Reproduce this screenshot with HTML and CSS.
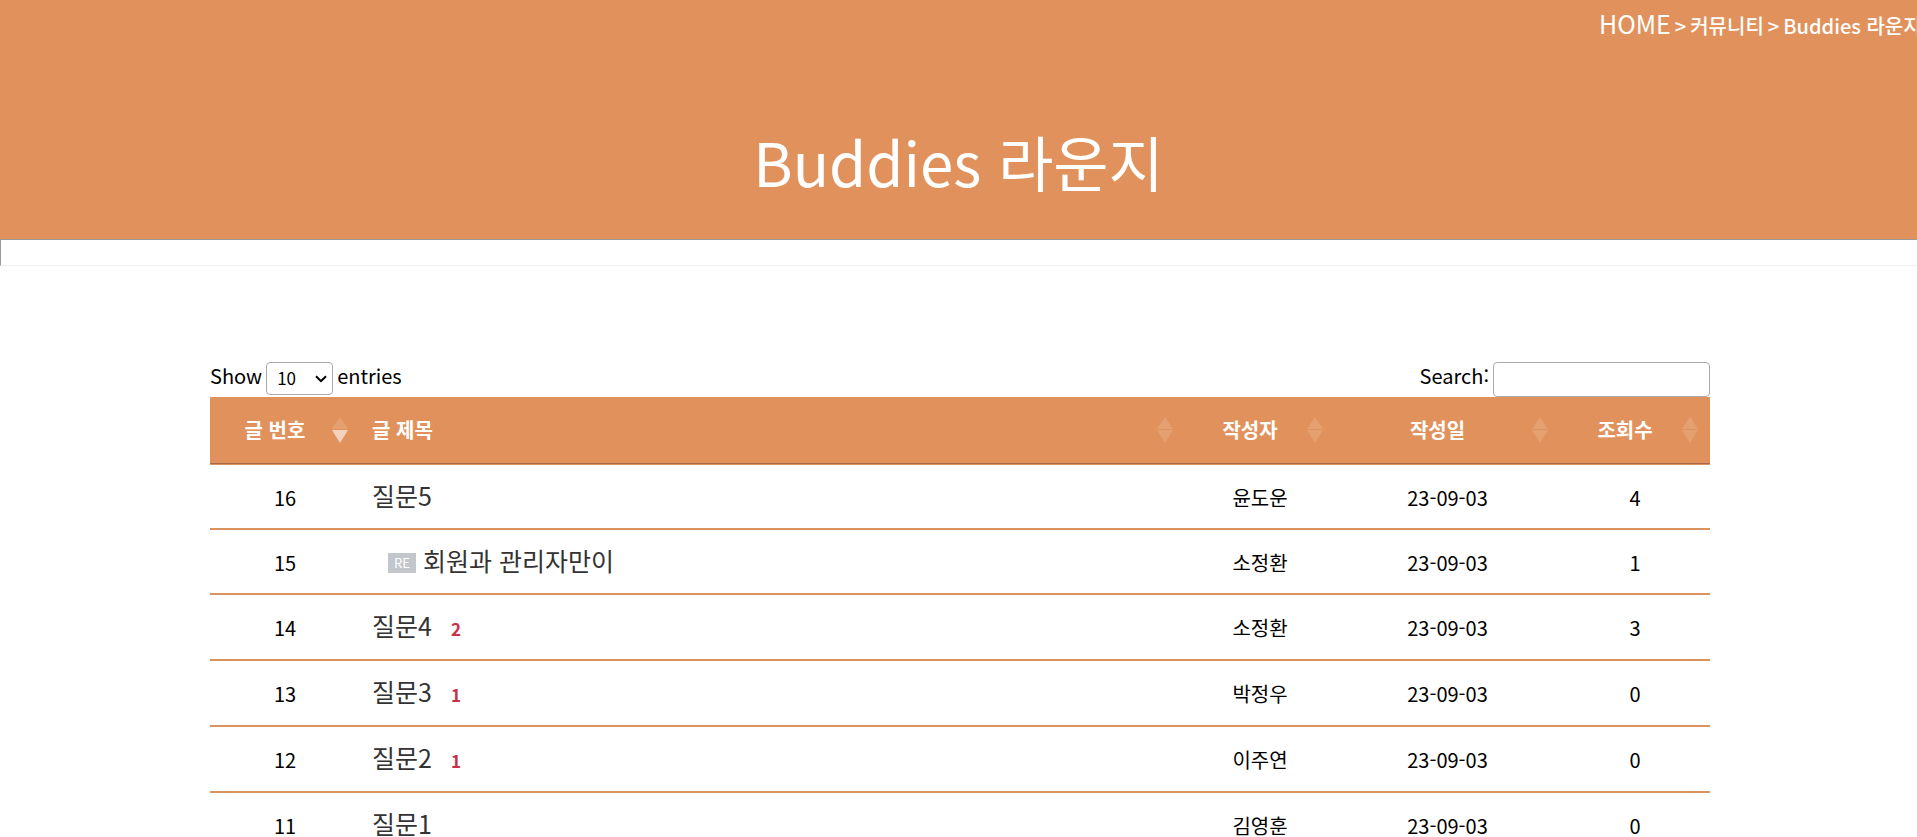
FILE: index.html
```html
<!DOCTYPE html>
<html lang="ko">
<head>
<meta charset="utf-8">
<title>Buddies 라운지</title>
<link rel="stylesheet" href="styles.css">
</head>
<body>
<header class="banner">
  <nav class="breadcrumb"><a class="home" href="#">HOME</a><span>&gt;</span><span>커뮤니티</span><span>&gt;</span><span>Buddies 라운지</span></nav>
  <h1 class="banner-title">Buddies 라운지</h1>
</header>
<hr class="divider">
<main class="board">
  <div class="controls">
    <label class="control">Show
      <span class="picker"><select class="length"><option>10</option><option>25</option><option>50</option><option>100</option></select><svg class="chevron" viewBox="0 0 12 8"><path d="M1 1.2L6 6.2L11 1.2"/></svg></span>
      entries</label>
    <label class="control">Search: <input class="search" type="search"></label>
  </div>
  <table class="posts">
    <colgroup><col class="c-no"><col class="c-title"><col class="c-writer"><col class="c-date"><col class="c-views"></colgroup>
    <thead>
      <tr>
        <th class="desc">글 번호<svg class="sort" viewBox="0 0 16 26"><path class="up" d="M8 0L16 12H0z"/><path class="down" d="M0 13H16L8 26z"/></svg></th>
        <th class="subject">글 제목<svg class="sort" viewBox="0 0 16 26"><path class="up" d="M8 0L16 12H0z"/><path class="down" d="M0 13H16L8 26z"/></svg></th>
        <th>작성자<svg class="sort" viewBox="0 0 16 26"><path class="up" d="M8 0L16 12H0z"/><path class="down" d="M0 13H16L8 26z"/></svg></th>
        <th>작성일<svg class="sort" viewBox="0 0 16 26"><path class="up" d="M8 0L16 12H0z"/><path class="down" d="M0 13H16L8 26z"/></svg></th>
        <th>조회수<svg class="sort" viewBox="0 0 16 26"><path class="up" d="M8 0L16 12H0z"/><path class="down" d="M0 13H16L8 26z"/></svg></th>
      </tr>
    </thead>
    <tbody>
      <tr><td>16</td><td class="subject"><a href="#">질문5</a></td><td>윤도운</td><td>23-09-03</td><td>4</td></tr>
      <tr><td>15</td><td class="subject"><span class="reply">RE</span><a href="#">회원과 관리자만이</a></td><td>소정환</td><td>23-09-03</td><td>1</td></tr>
      <tr class="commented"><td>14</td><td class="subject"><a href="#">질문4</a><span class="count">2</span></td><td>소정환</td><td>23-09-03</td><td>3</td></tr>
      <tr class="commented"><td>13</td><td class="subject"><a href="#">질문3</a><span class="count">1</span></td><td>박정우</td><td>23-09-03</td><td>0</td></tr>
      <tr class="commented"><td>12</td><td class="subject"><a href="#">질문2</a><span class="count">1</span></td><td>이주연</td><td>23-09-03</td><td>0</td></tr>
      <tr><td>11</td><td class="subject"><a href="#">질문1</a></td><td>김영훈</td><td>23-09-03</td><td>0</td></tr>
    </tbody>
  </table>
</main>
</body>
</html>
```
FILE: styles.css
```css
* { box-sizing: border-box; }

body {
  margin: 0;
  background: #fff;
  color: #000;
  font: 20px/30px "Noto Sans CJK KR", sans-serif;
}

a { color: inherit; text-decoration: none; }

.banner {
  height: 239px;
  background: #e1925c;
  color: #fff;
}

.breadcrumb {
  display: flex;
  align-items: baseline;
  gap: 4px;
  width: 318px;
  margin-left: auto;
  padding-top: 5px;
  line-height: 36px;
  font-weight: 500;
  white-space: nowrap;
  overflow: hidden;
}

.home { font-size: 25px; font-weight: 400; }

.banner-title {
  margin: 73px 0 0;
  font-size: 60px;
  line-height: 88px;
  font-weight: 400;
  text-align: center;
}

.divider {
  height: 27px;
  margin: 0;
  border: 1px solid #eee;
  border-top-color: #9a9a9a;
  border-left-color: #9a9a9a;
  border-right: 0;
}

.board {
  width: 1503px;
  max-width: 100%;
  height: 475px;
  margin: 96px auto 0;
  padding-left: 3px;
  overflow: hidden;
}

.controls {
  display: flex;
  justify-content: space-between;
  height: 35px;
  line-height: 28px;
}

.control {
  display: flex;
  align-items: flex-start;
  gap: 4px;
}

.picker { position: relative; height: 33px; }

.length,
.search {
  border: 1px solid #aaa;
  border-radius: 4px;
  background: #fff;
  color: #000;
  font-family: inherit;
}

.length {
  display: block;
  appearance: none;
  width: 67px;
  height: 33px;
  padding: 0 10px 2px;
  font-size: 17px;
  line-height: 29px;
}

.chevron {
  position: absolute;
  top: 13px;
  right: 6px;
  width: 12px;
  height: 8px;
  fill: none;
  stroke: #000;
  stroke-width: 2;
  pointer-events: none;
}

.search {
  width: 217px;
  height: 35px;
  padding: 5px;
  font-size: 16px;
}

.posts {
  width: 100%;
  table-layout: fixed;
  border-collapse: separate;
  border-spacing: 0;
}

.c-no, .c-writer, .c-views { width: 10%; }
.c-title { width: 55%; }
.c-date { width: 15%; }

th {
  position: relative;
  height: 67px;
  padding: 0 30px 0 10px;
  border-bottom: 1px solid #a9694a;
  background: #e1925c;
  color: #fff;
  font-weight: 700;
}

.sort {
  position: absolute;
  right: 12px;
  top: 20px;
  width: 16px;
  height: 26px;
  fill: #fff;
}

.up, .down { opacity: 0.13; }
.desc .down { opacity: 0.6; }

td {
  height: 65px;
  padding: 3px 10px 0;
  border-bottom: 2px solid #da935f;
  text-align: center;
}

tbody tr:first-child td {
  height: 66px;
  border-top: 1px solid #da935f;
}

.commented td { height: 66px; padding-top: 2px; }

.subject { padding-left: 12px; text-align: left; }

td.subject {
  padding-top: 0;
  padding-bottom: 3px;
  padding-left: 12px;
  color: #333;
  font-size: 25px;
}

.commented td.subject { padding-top: 0; padding-bottom: 0; }

.reply {
  display: inline-block;
  margin: 0 7px 0 16px;
  padding: 0 6px;
  background: #c3c6cb;
  color: #fff;
  font-size: 13px;
  line-height: 20px;
  vertical-align: 3px;
}

.count {
  margin-left: 19px;
  color: #cb2e46;
  font-size: 17px;
  font-weight: 700;
}
```
